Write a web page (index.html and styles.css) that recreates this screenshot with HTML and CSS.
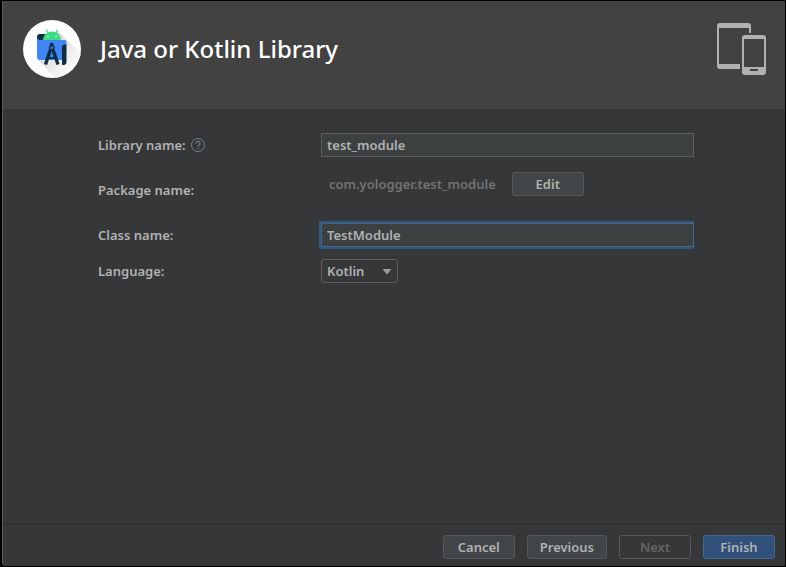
FILE: index.html
```html
<!DOCTYPE html>
<html lang="en">
<head>
<meta charset="utf-8">
<title>Java or Kotlin Library</title>
<link rel="stylesheet" href="styles.css">
</head>
<body>
<form class="dialog">
  <header class="header">
    <svg class="logo" viewBox="0 0 58 58" aria-hidden="true">
      <defs>
        <linearGradient id="shade" x1="0" y1="0" x2="1" y2="1">
          <stop offset="0.3" stop-color="#dcdcdc"/>
          <stop offset="0.75" stop-color="#ffffff"/>
        </linearGradient>
        <clipPath id="disc"><circle cx="29" cy="29" r="29"/></clipPath>
      </defs>
      <circle cx="29" cy="29" r="29" fill="#fff"/>
      <path d="M34 10L64 40V64H38L15 40Z" fill="url(#shade)" clip-path="url(#disc)"/>
      <path d="M17 14h7v6H14v-3a3 3 0 0 1 3-3z" fill="#0c3042"/>
      <path d="M23.500 10l1.800 3.500M34.500 10l-1.800 3.500" stroke="#3ddc84" stroke-width="1.200" stroke-linecap="round"/>
      <path d="M20 20.500c0-5.500 4-9 9-9s9 3.500 9 9z" fill="#3ddc84"/>
      <circle cx="25" cy="16.500" r="0.700" fill="#fff"/>
      <circle cx="33" cy="16.500" r="0.700" fill="#fff"/>
      <path d="M14 18q1 2 3 2h24.500a2 2 0 0 1 2 2v3H40V40H17a3 3 0 0 1-3-3z" fill="#4285f4"/>
      <path d="M39 27a2.500 2.500 0 0 1 2.500-2.500h2V42a3 3 0 0 1-3 3H39z" fill="#0c3042"/>
      <path d="M28.700 23v3M27.300 30L22.500 44.500M30.100 30L35 44.500" stroke="#0c3042" stroke-width="3.400"/>
      <path d="M25 37q3.700 2.500 7.500 0" stroke="#0c3042" stroke-width="2" fill="none"/>
      <circle cx="28.700" cy="27.700" r="2.100" fill="#4285f4" stroke="#0c3042" stroke-width="1.600"/>
    </svg>
    <h1 class="title">Java or Kotlin Library</h1>
    <svg class="devices" viewBox="0 0 50 52" aria-hidden="true">
      <path fill="#afb1b3" fill-rule="evenodd" d="M3 0H31a3 3 0 0 1 3 3V10H32V5H2V41H23V46H3a3 3 0 0 1-3-3V3a3 3 0 0 1 3-3z"/>
      <path fill="#afb1b3" fill-rule="evenodd" d="M28 12H46a3 3 0 0 1 3 3V49a3 3 0 0 1-3 3H28a3 3 0 0 1-3-3V15a3 3 0 0 1 3-3zM27 16V44H47V16zM33 46V48H41V46z"/>
    </svg>
  </header>
  <main class="fields">
    <div class="caption">
      <label for="library">Library name:</label>
      <svg class="help" viewBox="0 0 14 14" aria-hidden="true">
        <circle cx="7" cy="7" r="6.500" fill="none" stroke="#72808a"/>
        <path d="M5 5.500a2 2 0 1 1 3 1.700q-1 .5-1 1.500M7 9.800v1.200" fill="none" stroke="#72808a" stroke-width="1.200"/>
      </svg>
    </div>
    <input class="text" id="library" type="text" value="test_module">
    <span class="caption">Package name:</span>
    <div class="package">
      <span class="package-name">com.yologger.test_module</span>
      <button class="button" type="button">Edit</button>
    </div>
    <label class="caption" for="class">Class name:</label>
    <input class="text focused" id="class" type="text" value="TestModule">
    <label class="caption language" for="language">Language:</label>
    <div class="picker language">
      <select class="select" id="language"><option>Kotlin</option><option>Java</option></select>
      <svg class="arrow" viewBox="0 0 10 6" aria-hidden="true"><path d="M0.500 0H9.500L5 5.500Z" fill="#9a9da0"/></svg>
    </div>
  </main>
  <footer class="footer">
    <button class="button" type="button">Cancel</button>
    <button class="button" type="button">Previous</button>
    <button class="button" type="button" disabled>Next</button>
    <button class="button primary" type="submit">Finish</button>
  </footer>
</form>
</body>
</html>
```
FILE: styles.css
```css
* {
  box-sizing: border-box;
}

body {
  margin: 0;
  padding: 1px 1px 1px 2px;
  background: #000;
  color: #b0b2b3;
  font: 600 13px/16px "Noto Sans", sans-serif;
}

.dialog {
  display: flex;
  flex-direction: column;
  min-height: calc(100vh - 2px);
  border-left: 1px solid #5c5d5e;
  border-bottom-left-radius: 4px;
  background: #363738;
}

.header {
  display: flex;
  align-items: flex-start;
  height: 108px;
  padding: 19px 18px 0 20px;
  background: #424242;
}

.logo {
  width: 58px;
  height: 58px;
}

.title {
  flex: 1;
  margin: 13px 0 0 19px;
  color: #fff;
  font-size: 24px;
  font-weight: 500;
  line-height: 32px;
}

.devices {
  width: 50px;
  height: 52px;
  margin-top: 3px;
}

.fields {
  flex: 1;
  display: grid;
  grid-template-columns: 223px 1fr;
  align-content: start;
  align-items: center;
  row-gap: 15px;
  padding: 24px 91px 24px 95px;
}

.caption {
  display: flex;
  align-items: center;
  gap: 5px;
}

.help {
  width: 14px;
  height: 14px;
}

.text {
  width: 100%;
  height: 24px;
  padding: 0 5px;
  border: 1px solid #5c5e5f;
  border-radius: 0;
  outline: none;
  background: #3c4040;
  color: inherit;
  font: inherit;
}

.focused {
  border-color: #42658a;
  box-shadow: 0 0 0 2px #315780;
  clip-path: inset(-2px 0 -2px -2px);
}

.package {
  display: flex;
  align-items: center;
  gap: 16px;
  padding: 0 0 12px 8px;
}

.package-name {
  color: #717374;
}

.button {
  min-width: 72px;
  height: 24px;
  padding: 0 12px;
  border: 1px solid #56595b;
  border-radius: 3px;
  background: #414547;
  color: inherit;
  font: inherit;
}

.button:disabled {
  background: transparent;
  color: #636566;
}

.primary {
  border-color: #45688e;
  background: #31507a;
}

.language {
  margin-top: -3px;
}

.picker {
  position: relative;
  justify-self: start;
}

.select {
  display: block;
  width: 77px;
  height: 24px;
  padding: 0 5px;
  border: 1px solid #5c5e5f;
  border-radius: 3px;
  appearance: none;
  background: #363738;
  color: inherit;
  font: inherit;
}

.arrow {
  position: absolute;
  top: 10px;
  right: 6px;
  width: 10px;
  height: 6px;
  pointer-events: none;
}

.footer {
  display: flex;
  justify-content: flex-end;
  gap: 12px;
  padding: 11px 10px 7px;
  border-top: 1px solid #2b2c2d;
}
```
